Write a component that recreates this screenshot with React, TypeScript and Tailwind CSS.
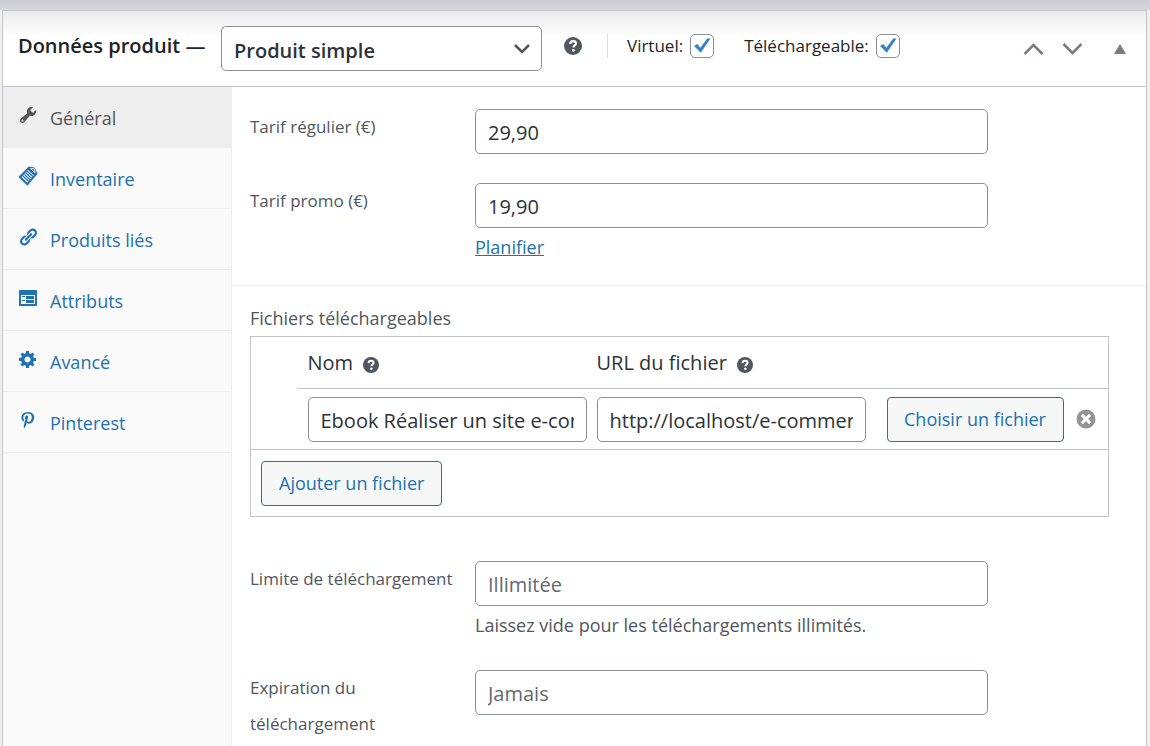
import type { ReactNode } from "react";

const inputClass =
    "block h-[45px] w-full rounded-[5px] border border-[#8c8f94] bg-white px-3 pt-[2px] text-[20px] text-[#2c3338] placeholder:text-[#646970] placeholder:opacity-100";
const buttonClass =
    "h-[45px] whitespace-nowrap rounded-[4px] border border-[#2271b1] bg-[#f6f7f7] text-[18px] text-[#2271b1]";

const WrenchIcon = () => (
    <svg viewBox="0 0 20 20" className="size-5" fill="currentColor">
        <path d="M16.68 9.77c-1.34 1.34-3.3 1.67-4.95.99l-5.41 6.52c-.99.99-2.59.99-3.58 0s-.99-2.59 0-3.57l6.52-5.42c-.68-1.65-.35-3.61.99-4.95 1.28-1.28 3.12-1.62 4.72-1.06l-2.89 2.89 2.82 2.82 2.86-2.87c.53 1.58.18 3.39-1.08 4.65zM3.81 16.21c.4.39 1.04.39 1.43 0 .4-.4.4-1.04 0-1.43-.39-.4-1.03-.4-1.43 0-.39.39-.39 1.03 0 1.43z" />
    </svg>
);

const NoteIcon = () => (
    <svg viewBox="0 0 20 20" className="size-5">
        <path d="M10.800.4 16.500 1.600 19.600 7.800 9.400 19.800.4 11z" fill="currentColor" />
        <path d="M10 4 15.800 9.400 9.400 16.800 3.600 11.200z" fill="#fff" />
        <path d="m9.200 5.200 5.800 5.600M7.800 6.800l5.800 5.600M6.400 8.400l5.800 5.600M5 10l5.700 5.500" stroke="currentColor" strokeWidth="1.200" />
        <path d="m12.600 2.600 4.600 4.200-.9-4z" stroke="#fff" strokeWidth=".9" fill="none" />
    </svg>
);

const LinkIcon = () => (
    <svg viewBox="0 0 20 20" className="size-5" fill="currentColor">
        <path d="M17.74 2.76c1.68 1.69 1.68 4.41 0 6.1l-1.53 1.52c-1.12 1.12-2.7 1.47-4.14 1.09l2.62-2.61.76-.77.76-.76c.84-.84.84-2.2 0-3.04-.84-.85-2.2-.85-3.04 0l-.77.76-3.38 3.38c-.37-1.44-.02-3.02 1.1-4.14l1.52-1.53c1.69-1.68 4.42-1.68 6.1 0zM8.59 13.43l5.34-5.34c.42-.42.42-1.1 0-1.52-.44-.43-1.13-.39-1.53 0l-5.33 5.34c-.42.42-.42 1.1 0 1.52.44.43 1.13.39 1.52 0zm-.76 2.29l4.14-4.15c.38 1.44.03 3.02-1.09 4.14l-1.52 1.53c-1.69 1.68-4.41 1.68-6.1 0-1.68-1.68-1.68-4.42 0-6.1l1.53-1.52c1.12-1.12 2.7-1.47 4.14-1.1l-4.14 4.15c-.85.84-.85 2.2 0 3.05.84.84 2.2.84 3.04 0z" />
    </svg>
);

const FeedbackIcon = () => (
    <svg viewBox="0 0 20 20" className="size-5">
        <path d="M2 2h16c.55 0 1 .45 1 1v14c0 .55-.45 1-1 1H2c-.55 0-1-.45-1-1V3c0-.55.45-1 1-1z" fill="currentColor" />
        <path fill="#fff" d="M17 7H3v9h14V7zM4 8v1h3V8H4zm4 0v3h8V8H8zm-4 4v1h3v-1H4zm4 0v3h8v-3H8z" fillRule="evenodd" />
    </svg>
);

const GearIcon = () => (
    <svg viewBox="0 0 20 20" className="size-5" fill="currentColor">
        <path d="M18 12h-2.18c-.17.7-.44 1.35-.81 1.93l1.54 1.54-2.1 2.1-1.54-1.54c-.58.36-1.23.63-1.91.79V19H8v-2.18c-.68-.16-1.33-.43-1.91-.79l-1.54 1.54-2.12-2.12 1.54-1.54c-.36-.58-.63-1.23-.79-1.91H1V9.03h2.17c.16-.7.44-1.35.8-1.94L2.43 5.55l2.1-2.1 1.54 1.54c.58-.37 1.24-.64 1.93-.81V2h3v2.18c.68.16 1.33.43 1.91.79l1.54-1.54 2.12 2.12-1.54 1.54c.36.59.64 1.24.8 1.94H18V12zm-8.5 1.5c1.66 0 3-1.34 3-3s-1.34-3-3-3-3 1.34-3 3 1.34 3 3 3z" />
    </svg>
);

const PinterestIcon = () => (
    <svg viewBox="0 0 20 20" className="size-5" fill="currentColor">
        <path d="M10.1 2C5.6 2 3.4 5 3.4 7.7c0 1.6.6 3 1.9 3.500.2.1.4 0 .5-.2l.2-.8c.1-.2 0-.3-.1-.5-.4-.5-.6-1-.6-1.9 0-2.400 1.800-4.300 4.600-4.300 2.500 0 3.900 1.500 3.900 3.600 0 2.700-1.200 4.900-3 4.900-1 0-1.700-.8-1.500-1.800.3-1.200.8-2.400.8-3.300 0-.8-.4-1.400-1.300-1.400-1 0-1.800 1-1.800 2.400 0 .9.300 1.500.3 1.500l-1.300 5.200c-.3 1.500-.1 3.400 0 3.600 0 .1.200.1.200.1.100-.1 1.300-1.700 1.800-3.200l.7-2.600c.3.600 1.300 1.200 2.300 1.200 3.100 0 5.200-2.800 5.200-6.600C16.200 4.300 13.700 2 10.100 2z" />
    </svg>
);

const HelpIcon = ({ className }: { className: string }) => (
    <svg viewBox="0 0 18 18" className={className} role="img" aria-label="Aide">
        <circle cx="9" cy="9" r="9" fill="#50575e" />
        <path d="M6.200 6.900C6.300 5 7.500 4.200 9.100 4.200c1.600 0 2.800.9 2.800 2.300 0 1.900-2.400 2-2.400 3.900" fill="none" stroke="#fff" strokeWidth="2.300" />
        <circle cx="9.400" cy="13.300" r="1.400" fill="#fff" />
    </svg>
);

const tabs = [
    { label: "Général", icon: <WrenchIcon />, active: true },
    { label: "Inventaire", icon: <NoteIcon /> },
    { label: "Produits liés", icon: <LinkIcon /> },
    { label: "Attributs", icon: <FeedbackIcon /> },
    { label: "Avancé", icon: <GearIcon /> },
    { label: "Pinterest", icon: <PinterestIcon /> },
];

const CheckOption = ({ id, label }: { id: string; label: string }) => (
    <label htmlFor={id} className="flex items-center gap-[7px] text-[17px] font-medium">
        {label}
        <span className="grid size-6">
            <input
                id={id}
                type="checkbox"
                defaultChecked
                className="peer col-start-1 row-start-1 size-6 appearance-none rounded-[5px] border border-[#8c8f94] bg-white"
            />
            <svg viewBox="0 0 24 24" className="pointer-events-none invisible col-start-1 row-start-1 size-6 peer-checked:visible">
                <path d="m4 12 3.200-2 3.200 3.800 6.800-9.400 3.300.2-9.700 14.200z" fill="#3582c4" />
            </svg>
        </span>
    </label>
);

type FieldProps = {
    id: string;
    label: string;
    value?: string;
    placeholder?: string;
    children?: ReactNode;
};

const Field = ({ id, label, value, placeholder, children }: FieldProps) => (
    <div className="grid grid-cols-[225px_minmax(0,513px)]">
        <label htmlFor={id} className="pr-5 text-[17px] leading-9">{label}</label>
        <div>
            <input id={id} type="text" defaultValue={value} placeholder={placeholder} className={inputClass} />
            {children}
        </div>
    </div>
);

const App = () => {
    return (
        <div className="flex min-h-screen flex-col bg-[#f0f0f1] font-['Open_Sans',sans-serif] text-[#50575e]">
            <div className="h-[10px] bg-linear-to-b from-[#cbccd1] to-[#d8d9dd]"></div>

            <section className="mr-[3px] ml-[2px] flex flex-1 flex-col border-x border-t border-[#c3c4c7] bg-white">

                <header className="flex h-[76px] items-center border-b border-[#c3c4c7] bg-linear-to-b from-[#ebebec] to-white to-35% pr-4 pb-[6px] pl-[15px] text-[#1d2327]">
                    <h2 className="w-[203px] shrink-0 text-[20px] font-semibold whitespace-nowrap">
                        <label htmlFor="product-type">Données produit —</label>
                    </h2>
                    <div className="mt-[6px] grid w-[321px]">
                        <select
                            id="product-type"
                            className="col-start-1 row-start-1 h-[45px] w-full appearance-none rounded-[5px] border border-[#8c8f94] bg-white px-3 pt-1 text-[20px] font-semibold text-[#2c3338]"
                        >
                            <option>Produit simple</option>
                        </select>
                        <svg viewBox="0 0 18 12" className="pointer-events-none col-start-1 row-start-1 mr-[11px] h-3 w-[18px] self-center justify-self-end">
                            <path d="m2 2 7 7 7-7" fill="none" stroke="#50575e" strokeWidth="2.500" />
                        </svg>
                    </div>
                    <HelpIcon className="ml-[22px] size-[18px]" />
                    <div className="ml-[25px] flex h-6 items-center gap-[30px] border-l border-[#dcdcde] pl-[19px]">
                        <CheckOption id="virtual" label="Virtuel:" />
                        <CheckOption id="downloadable" label="Téléchargeable:" />
                    </div>
                    <div className="mt-[6px] ml-auto flex items-center text-[#787c82]">
                        <button type="button" aria-label="Monter" className="px-2">
                            <svg viewBox="0 0 22 14" className="h-[14px] w-[23px]"><path d="m2 12 9-9 9 9" fill="none" stroke="currentColor" strokeWidth="2.500" /></svg>
                        </button>
                        <button type="button" aria-label="Descendre" className="px-2">
                            <svg viewBox="0 0 22 14" className="h-[14px] w-[23px]"><path d="m2 2 9 9 9-9" fill="none" stroke="currentColor" strokeWidth="2.500" /></svg>
                        </button>
                        <button type="button" aria-label="Replier" className="pr-1 pl-[22px]">
                            <svg viewBox="0 0 12 10" className="h-[10px] w-3"><path d="m6 0 6 10H0z" fill="currentColor" /></svg>
                        </button>
                    </div>
                </header>

                <div className="flex flex-1">

                    <nav className="w-[229px] shrink-0 border-r border-[#eee] bg-[#fafafa]">
                        {
                            tabs.map(tab => (
                                <a
                                    key={tab.label}
                                    href="#"
                                    className={`flex h-[61px] gap-3 border-b border-[#eee] pl-[15px] text-[18px] leading-[62px] ${tab.active ? "bg-[#eee] text-[#555]" : "text-[#2271b1]"}`}
                                >
                                    <span className="mt-[18px]">{tab.icon}</span>
                                    {tab.label}
                                </a>
                            ))
                        }
                    </nav>

                    <main className="min-w-0 flex-1">

                        <div className="flex flex-col gap-[29px] border-b border-[#eee] pt-[22px] pr-[37px] pb-[19px] pl-[18px]">
                            <Field id="regular-price" label="Tarif régulier (€)" value="29,90" />
                            <Field id="sale-price" label="Tarif promo (€)" value="19,90">
                                <a href="#" className="block text-[18px] leading-[38px] text-[#2271b1] underline">Planifier</a>
                            </Field>
                        </div>

                        <div className="pt-[14px] pr-[37px] pl-[18px]">
                            <h3 className="text-[18px] leading-9">Fichiers téléchargeables</h3>

                            <table className="w-full table-fixed border border-[#c3c4c7] text-[#2c3338]">
                                <colgroup>
                                    <col className="w-[46px]" />
                                    <col />
                                    <col className="w-[279px]" />
                                    <col className="w-[198px]" />
                                    <col className="w-10" />
                                </colgroup>
                                <thead>
                                    <tr className="h-[52px] text-left text-[20px]">
                                        <td></td>
                                        <th className="border-b border-[#c3c4c7] pl-[11px] font-normal">
                                            <span className="flex items-center gap-[10px]">Nom <HelpIcon className="mt-1 size-4" /></span>
                                        </th>
                                        <th className="border-b border-[#c3c4c7] pl-[5px] font-normal">
                                            <span className="flex items-center gap-[10px]">URL du fichier <HelpIcon className="mt-1 size-4" /></span>
                                        </th>
                                        <td colSpan={2} className="border-b border-[#c3c4c7]"></td>
                                    </tr>
                                </thead>
                                <tbody>
                                    <tr className="h-[61px]">
                                        <td></td>
                                        <td className="pr-[5px] pl-[11px]">
                                            <input type="text" aria-label="Nom" defaultValue="Ebook Réaliser un site e-commerce" className={inputClass} />
                                        </td>
                                        <td className="px-[5px]">
                                            <input type="text" aria-label="URL du fichier" defaultValue="http://localhost/e-commerce/ebook.pdf" className={inputClass} />
                                        </td>
                                        <td className="pr-[5px] pl-4">
                                            <button type="button" className={`${buttonClass} w-full`}>Choisir un fichier</button>
                                        </td>
                                        <td className="pl-[7px]">
                                            <button type="button" aria-label="Supprimer" className="block">
                                                <svg viewBox="0 0 18 18" className="size-5">
                                                    <circle cx="9" cy="9" r="8.500" fill="#949494" />
                                                    <path d="m5.300 5.300 7.400 7.400M12.700 5.300l-7.400 7.400" stroke="#fff" strokeWidth="2.600" />
                                                </svg>
                                            </button>
                                        </td>
                                    </tr>
                                </tbody>
                                <tfoot>
                                    <tr className="h-[67px] border-t border-[#c3c4c7]">
                                        <td colSpan={5} className="pl-[10px]">
                                            <button type="button" className={`${buttonClass} px-[17px]`}>Ajouter un fichier</button>
                                        </td>
                                    </tr>
                                </tfoot>
                            </table>
                        </div>

                        <div className="flex flex-col gap-[26px] pt-[44px] pr-[37px] pl-[18px]">
                            <Field id="download-limit" label="Limite de téléchargement" placeholder="Illimitée">
                                <p className="text-[18px] leading-[38px]">Laissez vide pour les téléchargements illimités.</p>
                            </Field>
                            <Field id="download-expiry" label="Expiration du téléchargement" placeholder="Jamais" />
                        </div>

                    </main>

                </div>
            </section>
        </div>
    )
}

export default App
